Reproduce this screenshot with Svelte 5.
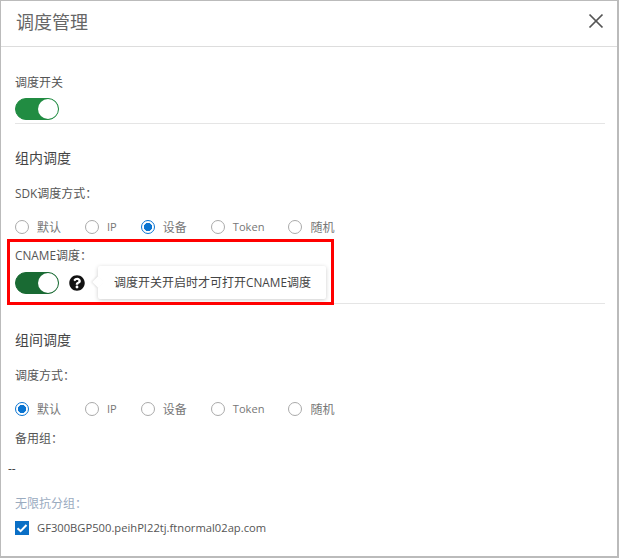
<script>
  const modes = ['默认', 'IP', '设备', 'Token', '随机'];
  const isLatin = (s) => /^[a-z]/i.test(s);
</script>

{#snippet radios(selected, name)}
  <div class="radios">
    {#each modes as mode}
      <label class="radio" class:checked={mode === selected}>
        <span class="dot"></span>
        <input type="radio" {name} checked={mode === selected} />
        <span class:latin={isLatin(mode)}>{mode}</span>
      </label>
    {/each}
  </div>
{/snippet}

{#snippet toggle(dark)}
  <span class="switch" class:dark><span class="knob"></span></span>
{/snippet}

<div class="dialog">
  <header>
    <h2>调度管理</h2>
    <button class="close" aria-label="关闭">
      <svg width="16" height="16" viewBox="0 0 16 16" fill="none" stroke="#555" stroke-width="1.7">
        <line x1="1.5" y1="1.5" x2="14.5" y2="14.5"></line>
        <line x1="14.5" y1="1.5" x2="1.5" y2="14.5"></line>
      </svg>
    </button>
  </header>

  <div class="body">
    <section class="first">
      <div class="label">调度开关</div>
      {@render toggle(false)}
    </section>

    <section class="group">
      <h3>组内调度</h3>
      <div class="label sdk"><span class="caps">SDK</span>调度方式：</div>
      {@render radios('设备', 'sdk')}
      <div class="cname">
        <div class="label"><span class="caps">CNAME</span>调度：</div>
        <div class="cname-row">
          {@render toggle(true)}
          <svg class="help" width="16" height="16" viewBox="0 0 512 512">
            <path fill="#111" d="M504 256c0 136.997-111.043 248-248 248S8 392.997 8 256C8 119.083 119.043 8 256 8s248 111.083 248 248zM262.655 90c-54.497 0-89.255 22.957-116.549 63.758-3.536 5.286-2.353 12.415 2.715 16.258l34.699 26.31c5.205 3.947 12.621 3.008 16.665-2.122 17.864-22.658 30.113-35.797 57.303-35.797 20.429 0 45.698 13.148 45.698 32.958 0 14.976-12.363 22.667-32.534 33.976C247.128 238.528 216 254.941 216 296v4c0 6.627 5.373 12 12 12h56c6.627 0 12-5.373 12-12v-1.333c0-28.462 83.186-29.647 83.186-106.667 0-58.002-60.165-102-116.531-102zM256 338c-25.365 0-46 20.635-46 46 0 25.364 20.635 46 46 46s46-20.636 46-46c0-25.365-20.635-46-46-46z"></path>
          </svg>
          <div class="tip">调度开关开启时才可打开<span class="caps">CNAME</span>调度</div>
        </div>
        <div class="mark"></div>
      </div>
    </section>

    <section class="inter">
      <h3>组间调度</h3>
      <div class="label sdk">调度方式：</div>
      {@render radios('默认', 'inter')}
      <div class="label backup">备用组：</div>
      <div class="dash">--</div>
      <div class="label muted">无限抗分组：</div>
      <label class="check">
        <span class="box">
          <svg width="14" height="14" viewBox="0 0 14 14" fill="none" stroke="#fff" stroke-width="2">
            <path d="M2.5 7.2 5.6 10.2 11.5 4"></path>
          </svg>
        </span>
        <span class="latin">GF300BGP500.peihPI22tj.ftnormal02ap.com</span>
      </label>
    </section>
  </div>
</div>

<style>
  :global(body) {
    margin: 0;
  }

  .dialog {
    box-sizing: border-box;
    width: 619px;
    height: 558px;
    border: 1px solid #bbb;
    border-width: 1px 2px 2px 1px;
    background: #fff;
    color: #444;
    font-family: "Open Sans", "Noto Sans CJK SC", sans-serif;
    font-size: 12px;
    overflow: hidden;
  }

  .latin {
    font-size: 11.2px;
    line-height: 1;
  }

  .radio .latin {
    font-size: 11.1px;
  }

  .caps {
    font-size: 11.8px;
    line-height: 1;
  }

  header {
    display: flex;
    align-items: center;
    justify-content: space-between;
    box-sizing: border-box;
    height: 46px;
    padding: 0 13px 5px 15px;
    border-bottom: 1px solid #ddd;
  }

  h2 {
    margin: 0;
    font-size: 18px;
    font-weight: 400;
    color: #666;
  }

  .close {
    display: flex;
    padding: 0;
    border: none;
    background: none;
  }

  .body {
    padding: 0 12px 0 14px;
  }

  .label {
    line-height: 18px;
    color: #555;
  }

  .first {
    padding-top: 27px;
    padding-bottom: 3px;
    border-bottom: 1px solid #e5e5e5;
  }

  .first .switch {
    margin-top: 6px;
  }

  .switch {
    position: relative;
    display: block;
    flex: none;
    box-sizing: border-box;
    width: 44px;
    height: 22px;
    border-radius: 11px;
    background: #218c42;
    border: 1px solid #218c42;
  }

  .switch.dark {
    background: #196a33;
    border-color: #196a33;
  }

  .knob {
    position: absolute;
    top: 0;
    right: 0;
    width: 20px;
    height: 20px;
    border-radius: 50%;
    background: #fff;
  }

  h3 {
    margin: 0;
    font-size: 14px;
    font-weight: 400;
    line-height: 20px;
    color: #444;
  }

  .group {
    padding-top: 24px;
    padding-bottom: 4px;
    border-bottom: 1px solid #e5e5e5;
  }

  .sdk {
    margin-top: 17px;
  }

  .radios {
    display: flex;
    margin-top: 15px;
    height: 18px;
    align-items: center;
  }

  .radio {
    display: flex;
    align-items: center;
    gap: 8px;
    margin-right: 24px;
    color: #777;
  }

  .radio input {
    display: none;
  }

  .dot {
    box-sizing: border-box;
    width: 14px;
    height: 14px;
    border: 1px solid #aaa;
    border-radius: 50%;
  }

  .checked .dot {
    border-color: #0a74d1;
    background: radial-gradient(circle, #0a74d1 0 3.8px, #fff 4.4px);
  }

  .cname {
    position: relative;
    margin-top: 11px;
  }

  .cname-row {
    display: flex;
    align-items: center;
    margin-top: 1px;
  }

  .help {
    margin-left: 10px;
    flex: none;
  }

  .tip {
    position: relative;
    margin-left: 13px;
    padding: 0 15px 0 16px;
    height: 33px;
    line-height: 33px;
    background: #fff;
    color: #444;
    border-radius: 2px;
    box-shadow: 0 1px 4px rgba(0, 0, 0, 0.2);
  }

  .tip::before {
    content: "";
    position: absolute;
    left: -4px;
    top: 12px;
    width: 8px;
    height: 8px;
    background: #fff;
    transform: rotate(45deg);
    box-shadow: -1px 1px 2px rgba(0, 0, 0, 0.1);
  }

  .mark {
    position: absolute;
    left: -8px;
    top: -8px;
    width: 327px;
    height: 66px;
    box-sizing: border-box;
    border: 3px solid #f00;
    pointer-events: none;
  }

  .inter {
    padding-top: 26px;
  }

  .backup {
    margin-top: 12px;
  }

  .dash {
    margin: 12px 0 0 -7px;
    line-height: 18px;
    color: #444;
  }

  .muted {
    margin-top: 17px;
    color: #9aabbf;
  }

  .check {
    display: flex;
    align-items: center;
    gap: 8px;
    margin-top: 8px;
    color: #555;
  }

  .box {
    display: flex;
    align-items: center;
    justify-content: center;
    width: 14px;
    height: 14px;
    background: #0a6fc6;
  }
</style>
